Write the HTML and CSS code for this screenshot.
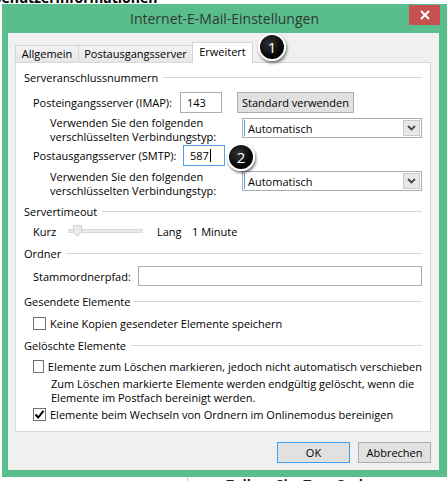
FILE: index.html
```html
<!DOCTYPE html>
<html lang="de">
<head>
<meta charset="utf-8">
<title>Internet-E-Mail-Einstellungen</title>
<link rel="stylesheet" href="styles.css">
</head>
<body>
<div class="bgtop"><span>Benutzerinformationen</span></div>
<div class="window">
  <div class="titlebar">
    <div></div>
    <div class="title">Internet-E-Mail-Einstellungen</div>
    <div class="close-cell">
      <div class="close"><svg width="10" height="10" viewBox="0 0 10 10"><path d="M1 1L9 9M9 1L1 9" stroke="#fff" stroke-width="2" fill="none"/></svg></div>
    </div>
  </div>
  <div class="client">
    <div class="tabs">
      <div class="tab t-allg">Allgemein</div>
      <div class="tab t-post">Postausgangsserver</div>
      <div class="tab t-erw active">Erweitert</div>
    </div>
    <div class="panel">
      <div class="group g-server"><span>Serveranschlussnummern</span></div>
      <div class="row r-imap">
        <div class="lbl l-imap">Posteingangsserver (IMAP):</div>
        <div class="input i-port">143</div>
        <div class="btn b-std">Standard verwenden</div>
      </div>
      <div class="row r-enc1">
        <div class="enc-text">Verwenden Sie den folgenden<br>verschlüsselten Verbindungstyp:</div>
        <div class="select s-enc1"><span class="caretbar"></span><span class="sel-text">Automatisch</span><span class="dd"><svg width="9" height="6" viewBox="0 0 9 6"><path d="M1 1L4.5 4.5L8 1" stroke="#444" stroke-width="1.8" fill="none"/></svg></span></div>
      </div>
      <div class="row r-smtp">
        <div class="lbl l-smtp">Postausgangsserver (SMTP):</div>
        <div class="input i-port focus">587<span class="cursor"></span></div>
      </div>
      <div class="row r-enc2">
        <div class="enc-text">Verwenden Sie den folgenden<br>verschlüsselten Verbindungstyp:</div>
        <div class="select s-enc2"><span class="caretbar"></span><span class="sel-text">Automatisch</span><span class="dd"><svg width="9" height="6" viewBox="0 0 9 6"><path d="M1 1L4.5 4.5L8 1" stroke="#444" stroke-width="1.8" fill="none"/></svg></span></div>
      </div>
      <div class="group g-timeout"><span>Servertimeout</span></div>
      <div class="row r-timeout">
        <div class="lbl l-kurz">Kurz</div>
        <div class="slider"><svg class="thumb" width="9" height="12" viewBox="0 0 9 12"><path d="M0.5 0.5H8.5V7.5L4.5 11.5L0.5 7.5Z" fill="#e9e9e9" stroke="#d0d0d0"/></svg></div>
        <div class="lbl l-lang">Lang</div>
        <div class="lbl">1 Minute</div>
      </div>
      <div class="group g-ordner"><span>Ordner</span></div>
      <div class="row r-folder">
        <div class="lbl l-stamm">Stammordnerpfad:</div>
        <div class="input i-wide"></div>
      </div>
      <div class="group g-sent"><span>Gesendete Elemente</span></div>
      <div class="row r-cb-sent">
        <span class="cb"></span><span class="cb-label">Keine Kopien gesendeter Elemente speichern</span>
      </div>
      <div class="group g-del"><span>Gelöschte Elemente</span></div>
      <div class="row r-cb-del1">
        <span class="cb"></span><span class="cb-label">Elemente zum Löschen markieren, jedoch nicht automatisch verschieben</span>
      </div>
      <div class="note">Zum Löschen markierte Elemente werden endgültig gelöscht, wenn die<br>Elemente im Postfach bereinigt werden.</div>
      <div class="row r-cb-del2">
        <span class="cb checked"><svg width="11" height="11" viewBox="0 0 11 11"><path d="M1.5 5.5L4.2 8.5L9.5 1.8" stroke="#000" stroke-width="2" fill="none"/></svg></span><span class="cb-label">Elemente beim Wechseln von Ordnern im Onlinemodus bereinigen</span>
      </div>
    </div>
    <div class="buttons">
      <div class="btn b-dlg ok">OK</div>
      <div class="btn b-dlg">Abbrechen</div>
    </div>
  </div>
</div>
<div class="bgbottom"><div class="bgb-pane"><span>Zeilen&nbsp;&nbsp;Sie&nbsp;&nbsp;Tex&nbsp;&nbsp;Gr&nbsp;&nbsp;l</span></div></div>
<div class="badge b1">1</div>
<div class="badge b2">2</div>
</body>
</html>
```
FILE: styles.css
```css
* { box-sizing: border-box; }
html, body { margin: 0; padding: 0; }
body {
  width: 447px;
  height: 481px;
  overflow: hidden;
  background: #fff;
  font-family: "Open Sans", "Noto Sans", sans-serif;
  font-size: 11px;
  color: #000;
  position: relative;
}

.bgtop {
  height: 4px;
  overflow: hidden;
  display: flex;
  align-items: flex-end;
}
.bgtop span {
  font-weight: bold;
  font-size: 14px;
  line-height: 14px;
  margin-left: -8px;
  margin-bottom: -1px;
  white-space: nowrap;
}

.window {
  margin-left: 2px;
  width: 445px;
  background: #5abd8c;
  padding-bottom: 7px;
}

.titlebar {
  height: 29px;
  display: grid;
  grid-template-columns: 1fr auto 1fr;
  align-items: start;
}
.title {
  font-size: 14px;
  line-height: 29px;
  color: #2d3a33;
  white-space: nowrap;
}
.close-cell {
  display: flex;
  justify-content: flex-end;
}
.close {
  margin-top: 1px;
  margin-right: 7px;
  width: 31px;
  height: 20px;
  background: #c75050;
  display: flex;
  align-items: center;
  justify-content: center;
}

.client {
  margin: 0 8px 0 6px;
  height: 437px;
  background: #f0f0f0;
  padding: 9px 8px 0 7px;
  display: flex;
  flex-direction: column;
}

.tabs {
  height: 21px;
  display: flex;
  align-items: flex-end;
}
.tab {
  height: 18px;
  border: 1px solid #d6d6d6;
  border-bottom: none;
  background: linear-gradient(#f2f2f2, #e6e6e6);
  margin-right: -1px;
  text-align: center;
  line-height: 16px;
  white-space: nowrap;
}
.t-allg { width: 64px; }
.t-post { width: 115px; }
.t-erw { width: 61px; }
.tab.active {
  height: 21px;
  background: #fff;
  position: relative;
  z-index: 1;
  line-height: 18px;
}

.panel {
  margin-top: -1px;
  height: 370px;
  background: #fff;
  border: 1px solid #d9d9d9;
  padding: 0 8px;
  display: flex;
  flex-direction: column;
}

.group {
  height: 16px;
  display: flex;
  align-items: center;
  white-space: nowrap;
}
.group::after {
  content: "";
  flex: 1;
  height: 1px;
  background: #d5d5d5;
  margin-left: 5px;
}
.g-server { margin-top: 6px; }
.g-timeout { margin-top: 2px; }
.g-ordner { margin-top: 6px; }
.g-sent { margin-top: 7px; }
.g-del { margin-top: 6px; }

.row {
  display: flex;
  align-items: center;
  margin-left: 9px;
  white-space: nowrap;
}
.lbl { white-space: nowrap; }
.l-imap { width: 147px; }
.l-smtp { width: 150px; }
.l-kurz { width: 35px; }
.l-lang { width: 35px; margin-left: 14px; }
.l-stamm { width: 105px; }

.r-imap { margin-top: 7px; height: 21px; }
.r-enc1 { margin-top: 2px; height: 30px; align-items: flex-start; }
.r-smtp { margin-top: 0; height: 21px; }
.r-enc2 { margin-top: 0; height: 35px; align-items: flex-start; }
.r-timeout { margin-top: 4px; height: 16px; }
.r-folder { margin-top: 5px; height: 20px; }
.r-cb-sent { margin-top: 6px; height: 16px; }
.r-cb-del1 { margin-top: 5px; height: 16px; }
.r-cb-del2 { margin-top: 2px; height: 16px; }

.input {
  height: 21px;
  background: #fff;
  border: 1px solid #abadb3;
  padding-left: 6px;
  line-height: 19px;
  display: flex;
  align-items: center;
}
.i-port { width: 42px; }
.input.focus { border-color: #569de5; }
.cursor {
  display: inline-block;
  width: 1px;
  height: 13px;
  background: #000;
  margin-left: 1px;
}
.i-wide { flex: 1; height: 20px; }

.btn {
  height: 21px;
  background: #e1e1e1;
  border: 1px solid #adadad;
  display: flex;
  align-items: center;
  justify-content: center;
  white-space: nowrap;
}
.b-std { width: 117px; margin-left: 15px; }

.enc-text {
  width: 192px;
  margin-left: 17px;
  line-height: 14px;
  padding-top: 1px;
}
.r-enc2 .enc-text { padding-top: 4px; }

.select {
  width: 180px;
  height: 20px;
  background: #fff;
  border: 1px solid #abadb3;
  display: flex;
  align-items: center;
}
.s-enc1 { margin-top: 3px; }
.s-enc2 { margin-top: 5px; }
.caretbar {
  width: 1px;
  height: 16px;
  background: #569de5;
  margin-left: 1px;
}
.sel-text { flex: 1; padding-left: 3px; }
.dd {
  width: 17px;
  height: 16px;
  margin-right: 1px;
  background: #e8e8e8;
  border: 1px solid #c9c9c9;
  display: flex;
  align-items: center;
  justify-content: center;
}

.slider {
  width: 75px;
  height: 12px;
  background: linear-gradient(#fff 0 4px, #d8d8d8 4px 5px, #e9e9e9 5px 7px, #d8d8d8 7px 8px, #fff 8px);
  display: flex;
  align-items: center;
}
.thumb { margin-left: 5px; }

.cb {
  width: 13px;
  height: 13px;
  border: 1px solid #707070;
  background: #fff;
  display: flex;
  align-items: center;
  justify-content: center;
}
.cb-label { margin-left: 4px; }

.note {
  margin-left: 27px;
  margin-top: 3px;
  line-height: 14px;
  white-space: nowrap;
}
.r-cb-del2 { margin-top: 1px; }

.buttons {
  margin-top: 10px;
  display: flex;
  justify-content: flex-end;
  gap: 8px;
}
.b-dlg { width: 73px; height: 21px; }
.btn.ok { border-color: #3c9ef0; }

.bgbottom {
  height: 4px;
  overflow: hidden;
  padding-left: 187px;
}
.bgb-pane {
  height: 4px;
  border-left: 1px solid #c8c8c8;
  padding-left: 38px;
  display: flex;
  align-items: flex-start;
}
.bgb-pane span {
  font-size: 14px;
  font-weight: bold;
  line-height: 14px;
  margin-top: 1px;
  white-space: nowrap;
  color: #222;
}

.badge {
  position: absolute;
  width: 28px;
  height: 28px;
  border-radius: 50%;
  background: radial-gradient(circle at 40% 35%, #333, #000 70%);
  border: 2px solid #fff;
  box-shadow: 1px 2px 3px rgba(0,0,0,0.55);
  color: #fff;
  font-size: 15px;
  display: flex;
  align-items: center;
  justify-content: center;
  z-index: 5;
}
.b1 { left: 258px; top: 33px; }
.b2 { left: 227px; top: 143px; }
```
